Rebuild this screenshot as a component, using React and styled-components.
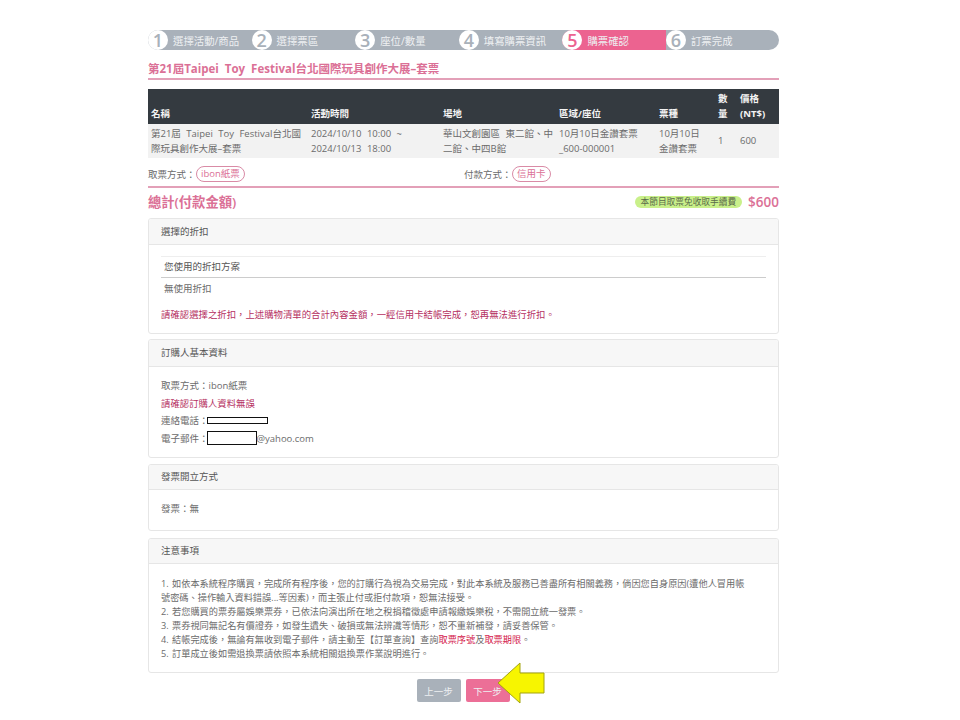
import React from 'react';
import styled, { createGlobalStyle } from 'styled-components';

const GlobalStyle = createGlobalStyle`
  html, body {
    margin: 0;
    padding: 0;
    background: #fff;
  }
  body {
    font-family: 'Open Sans', 'Noto Sans CJK TC', sans-serif;
    font-size: 9.5px;
    color: #6b6b6b;
  }
`;

const Page = styled.div`
  position: relative;
  width: 631px;
  height: 720px;
  margin-left: 148px;
  padding-top: 30px;
  box-sizing: border-box;
`;

const Steps = styled.ol`
  display: grid;
  grid-template-columns: repeat(5, 103.6px) 1fr;
  height: 20px;
  margin: 0;
  padding: 0;
  list-style: none;
  background: #a9b1ba;
  border-radius: 10px;
`;

const Step = styled.li`
  display: flex;
  align-items: center;
  gap: 5px;
  color: #eef0f2;
  font-size: 10.4px;
  background: ${(p) => (p.$active ? '#ec6390' : 'transparent')};
  border-radius: 10px 0 0 10px;
`;

const StepNumber = styled.span`
  flex: none;
  display: flex;
  align-items: center;
  justify-content: center;
  width: 20px;
  height: 20px;
  border-radius: 50%;
  background: #fff;
  color: ${(p) => (p.$active ? '#ec6390' : '#a9b1ba')};
  font-size: 18px;
  line-height: 20px;
  font-weight: 600;
`;

const Title = styled.h1`
  margin: 11px 0 0;
  height: 17px;
  border-bottom: 2px solid #e3a0b8;
  color: #db7096;
  font-size: 11.5px;
  line-height: 15px;
  font-weight: 700;
`;

const OrderTable = styled.table`
  width: 100%;
  margin-top: 9px;
  border-collapse: collapse;
  table-layout: fixed;
  word-spacing: 3px;
`;

const HeadCell = styled.th`
  height: 35px;
  padding: 0 3px 3px;
  box-sizing: border-box;
  background: #343a40;
  color: #f4f4f4;
  font-size: 9.5px;
  line-height: 15px;
  font-weight: 700;
  text-align: left;
  vertical-align: bottom;
  word-spacing: 0;
`;

const BodyCell = styled.td`
  height: 34px;
  padding: 0 3px 1px;
  box-sizing: border-box;
  background: #f2f2f2;
  color: #6b6b6b;
  font-size: 9.5px;
  line-height: 15px;
  vertical-align: middle;
`;

const MethodRow = styled.div`
  display: grid;
  grid-template-columns: 316px 1fr;
  height: 30px;
  box-sizing: border-box;
  align-items: center;
  border-bottom: 2px solid #e3a0b8;
  padding-top: 3px;
`;

const Method = styled.div`
  display: flex;
  align-items: center;
`;

const Pill = styled.span`
  display: inline-block;
  height: 14px;
  padding: 0 4.5px;
  border: 1px solid #d98ba6;
  border-radius: 8px;
  color: #db7096;
  font-size: 9.5px;
  line-height: 14px;
`;

const TotalRow = styled.div`
  display: flex;
  align-items: center;
  justify-content: space-between;
  height: 30px;
  box-sizing: border-box;
  padding-bottom: 3px;
`;

const TotalLabel = styled.h2`
  margin: 0;
  color: #db7096;
  font-size: 13.3px;
  font-weight: 600;
`;

const TotalRight = styled.div`
  display: flex;
  align-items: center;
  gap: 6px;
`;

const FeeBadge = styled.span`
  padding: 0 6px;
  height: 12px;
  border-radius: 6px;
  background: #c9f08a;
  color: #5b6b4a;
  font-size: 8.7px;
  line-height: 12px;
`;

const Amount = styled.span`
  color: #db7096;
  font-size: 13.5px;
  font-weight: 600;
`;

const Panel = styled.section`
  height: ${(p) => p.$height}px;
  margin-bottom: ${(p) => p.$gap}px;
  box-sizing: border-box;
  border: 1px solid #e6e6e6;
  border-radius: 3px;
  overflow: hidden;
`;

const PanelHeader = styled.header`
  display: flex;
  align-items: center;
  height: ${(p) => p.$height || 25}px;
  padding: 0 0 2px 12px;
  box-sizing: border-box;
  background: #f7f7f7;
  border-bottom: 1px solid #e6e6e6;
  color: #555;
  font-size: 9.5px;
`;

const PanelBody = styled.div`
  padding: ${(p) => p.$padding || '11px 12px'};
  line-height: 17.5px;
`;

const DiscountHeading = styled.div`
  height: 20px;
  padding-left: 3px;
  border-top: 1px solid #eee;
  border-bottom: 1px solid #ccc;
  color: #555;
  line-height: 20px;
`;

const DiscountValue = styled.div`
  padding-left: 3px;
  height: 28px;
  line-height: 21px;
`;

const Warning = styled.div`
  color: #b5305f;
  font-size: 9.4px;
`;

const ContactLine = styled.div`
  display: flex;
  align-items: center;
  height: 17.5px;
`;

const Redacted = styled.span`
  display: inline-block;
  width: ${(p) => p.$width}px;
  height: ${(p) => p.$height}px;
  margin-left: -2px;
  box-sizing: border-box;
  border: 1px solid #111;
  background: #fff;
`;

const Notes = styled.ol`
  margin: 0;
  padding: 13px 12px 0;
  list-style: none;
  font-size: 9.2px;
  line-height: 14.1px;
  word-spacing: 1px;
`;

const Hot = styled.span`
  color: #d4204a;
`;

const Actions = styled.div`
  display: flex;
  justify-content: center;
  gap: 5px;
  margin-top: 6px;
  padding-right: 1px;
`;

const ActionButton = styled.button`
  width: 44px;
  height: 23px;
  padding: 0;
  border: 0;
  border-radius: 2px;
  background: ${(p) => (p.$primary ? '#ec6f97' : '#a9b1ba')};
  color: #eef0f2;
  font-family: inherit;
  font-size: 9.5px;
`;

const Arrow = styled.svg`
  position: absolute;
  left: 349px;
  top: 662px;
  width: 48px;
  height: 42px;
`;

const steps = [
  '選擇活動/商品',
  '選擇票區',
  '座位/數量',
  '填寫購票資訊',
  '購票確認',
  '訂票完成',
];

const notes = [
  '1. 如依本系統程序購買，完成所有程序後，您的訂購行為視為交易完成，對此本系統及服務已善盡所有相關義務，倘因您自身原因(遭他人冒用帳',
  '號密碼、操作輸入資料錯誤...等因素)，而主張止付或拒付款項，恕無法接受。',
  '2. 若您購買的票券屬娛樂票券，已依法向演出所在地之稅捐稽徵處申請報繳娛樂稅，不需開立統一發票。',
  '3. 票券視同無記名有價證券，如發生遺失、破損或無法辨識等情形，恕不重新補發，請妥善保管。',
];

const App = () => (
  <Page>
    <GlobalStyle />
    <Steps>
      {steps.map((label, i) => (
        <Step key={label} $active={i === 4}>
          <StepNumber $active={i === 4}>{i + 1}</StepNumber>
          {label}
        </Step>
      ))}
    </Steps>

    <Title>第21屆Taipei&nbsp; Toy&nbsp; Festival台北國際玩具創作大展–套票</Title>

    <OrderTable>
      <colgroup>
        <col style={{ width: 160 }} />
        <col style={{ width: 132 }} />
        <col style={{ width: 116 }} />
        <col style={{ width: 100 }} />
        <col style={{ width: 59 }} />
        <col style={{ width: 22 }} />
        <col />
      </colgroup>
      <thead>
        <tr>
          <HeadCell>名稱</HeadCell>
          <HeadCell>活動時間</HeadCell>
          <HeadCell>場地</HeadCell>
          <HeadCell>區域/座位</HeadCell>
          <HeadCell>票種</HeadCell>
          <HeadCell>數量</HeadCell>
          <HeadCell>價格 (NT$)</HeadCell>
        </tr>
      </thead>
      <tbody>
        <tr>
          <BodyCell>第21屆 Taipei Toy Festival台北國際玩具創作大展–套票</BodyCell>
          <BodyCell>2024/10/10 10:00 ~ 2024/10/13 18:00</BodyCell>
          <BodyCell>華山文創園區 東二館、中二館、中四B館</BodyCell>
          <BodyCell>10月10日金讚套票 _600-000001</BodyCell>
          <BodyCell>10月10日<br />金讚套票</BodyCell>
          <BodyCell>1</BodyCell>
          <BodyCell>600</BodyCell>
        </tr>
      </tbody>
    </OrderTable>

    <MethodRow>
      <Method>取票方式：<Pill>ibon紙票</Pill></Method>
      <Method>付款方式：<Pill>信用卡</Pill></Method>
    </MethodRow>

    <TotalRow>
      <TotalLabel>總計(付款金額)</TotalLabel>
      <TotalRight>
        <FeeBadge>本節目取票免收取手續費</FeeBadge>
        <Amount>$600</Amount>
      </TotalRight>
    </TotalRow>

    <Panel $height={116} $gap={5}>
      <PanelHeader $height={26}>選擇的折扣</PanelHeader>
      <PanelBody>
        <DiscountHeading>您使用的折扣方案</DiscountHeading>
        <DiscountValue>無使用折扣</DiscountValue>
        <Warning>請確認選擇之折扣，上述購物清單的合計內容金額，一經信用卡結帳完成，恕再無法進行折扣。</Warning>
      </PanelBody>
    </Panel>

    <Panel $height={119} $gap={6}>
      <PanelHeader $height={27}>訂購人基本資料</PanelHeader>
      <PanelBody $padding="10px 12px">
        <ContactLine>取票方式：ibon紙票</ContactLine>
        <ContactLine><Warning>請確認訂購人資料無誤</Warning></ContactLine>
        <ContactLine>連絡電話：<Redacted $width={61} $height={7} /></ContactLine>
        <ContactLine>電子郵件：<Redacted $width={50} $height={14} />@yahoo.com</ContactLine>
      </PanelBody>
    </Panel>

    <Panel $height={67} $gap={7}>
      <PanelHeader>發票開立方式</PanelHeader>
      <PanelBody $padding="10px 12px">發票：無</PanelBody>
    </Panel>

    <Panel $height={135} $gap={0}>
      <PanelHeader>注意事項</PanelHeader>
      <Notes>
        {notes.map((note) => (
          <li key={note}>{note}</li>
        ))}
        <li>4. 結帳完成後，無論有無收到電子郵件，請主動至【訂單查詢】查詢<Hot>取票序號</Hot>及<Hot>取票期限</Hot>。</li>
        <li>5. 訂單成立後如需退換票請依照本系統相關退換票作業說明進行。</li>
      </Notes>
    </Panel>

    <Actions>
      <ActionButton>上一步</ActionButton>
      <ActionButton $primary>下一步</ActionButton>
    </Actions>

    <Arrow viewBox="0 0 48 42">
      <polygon points="1,21 23,1 23,11 47,11 47,31 23,31 23,41" fill="#f7f500" stroke="#a3a310" strokeWidth="1" />
    </Arrow>
  </Page>
);

export default App;
